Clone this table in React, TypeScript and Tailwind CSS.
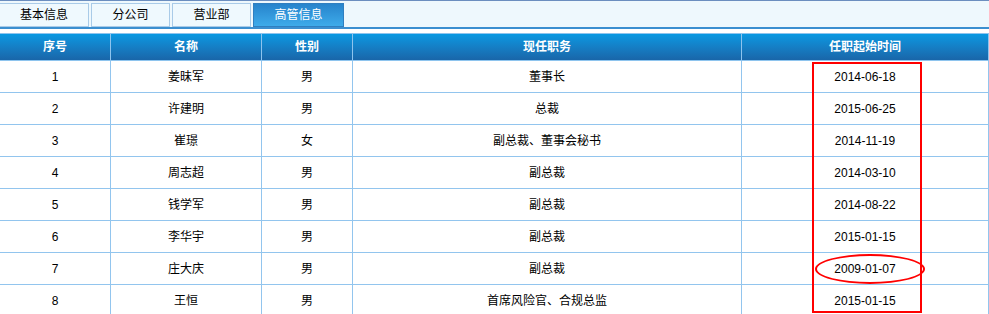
import React from "react";

const rows = [
  ["1", "姜昧军", "男", "董事长", "2014-06-18"],
  ["2", "许建明", "男", "总裁", "2015-06-25"],
  ["3", "崔璟", "女", "副总裁、董事会秘书", "2014-11-19"],
  ["4", "周志超", "男", "副总裁", "2014-03-10"],
  ["5", "钱学军", "男", "副总裁", "2014-08-22"],
  ["6", "李华宇", "男", "副总裁", "2015-01-15"],
  ["7", "庄大庆", "男", "副总裁", "2009-01-07"],
  ["8", "王恒", "男", "首席风险官、合规总监", "2015-01-15"],
];

const widths = ["w-[111px]", "w-[151px]", "w-[91px]", "w-[389px]", "w-[247px]"];
const heads = ["序号", "名称", "性别", "现任职务", "任职起始时间"];
const tabs = [
  { t: "基本信息", w: "w-[89px]", active: false },
  { t: "分公司", w: "w-[79px]", active: false },
  { t: "营业部", w: "w-[79px]", active: false },
  { t: "高管信息", w: "w-[91px]", active: true },
];

export default function App() {
  return (
    <div
      className="relative w-[989px] h-[314px] overflow-hidden bg-white text-[12px] text-black"
      style={{ fontFamily: '"Liberation Sans", "Noto Sans CJK SC", sans-serif' }}
    >
      <div className="h-[29px] border-t border-[#6b8ebf] border-b-2 border-b-[#3b8fd0] bg-[#eef8fd] flex items-end gap-[2px]">
        {tabs.map((tb) => (
          <div
            key={tb.t}
            className={`${tb.w} h-[24px] flex items-center justify-center border ${
              tb.active
                ? "border-[#2f7fc0] bg-gradient-to-b from-[#2784cc] to-[#3eabea] text-white"
                : "border-[#a9cbe8] bg-[#eff9fe] text-black"
            } first:border-l-0`}
          >
            {tb.t}
          </div>
        ))}
      </div>
      <div className="mt-[4px] border-t border-[#8ec4ee]">
        <div className="flex h-[27px] bg-gradient-to-b from-[#0898e2] to-[#1966a9] border-b border-[#8ec4ee]">
          {heads.map((h, i) => (
            <div
              key={h}
              className={`${widths[i]} flex items-center justify-center font-bold text-white ${
                i < 4 ? "border-r border-[#8ec4ee]" : "border-r border-[#8ec4ee]"
              }`}
            >
              {h}
            </div>
          ))}
        </div>
        {rows.map((r) => (
          <div key={r[0]} className="flex h-[32px] border-b border-[#92c5ee]">
            {r.map((c, i) => (
              <div
                key={i}
                className={`${widths[i]} flex items-center justify-center border-r border-[#92c5ee]`}
              >
                {c}
              </div>
            ))}
          </div>
        ))}
      </div>
      <div className="absolute left-[812px] top-[62px] w-[110px] h-[251px] border-2 border-[#ff0000]" />
      <div className="absolute left-[815px] top-[254px] w-[110px] h-[30px] rounded-[50%] border-2 border-[#ff0000]" />
    </div>
  );
}
